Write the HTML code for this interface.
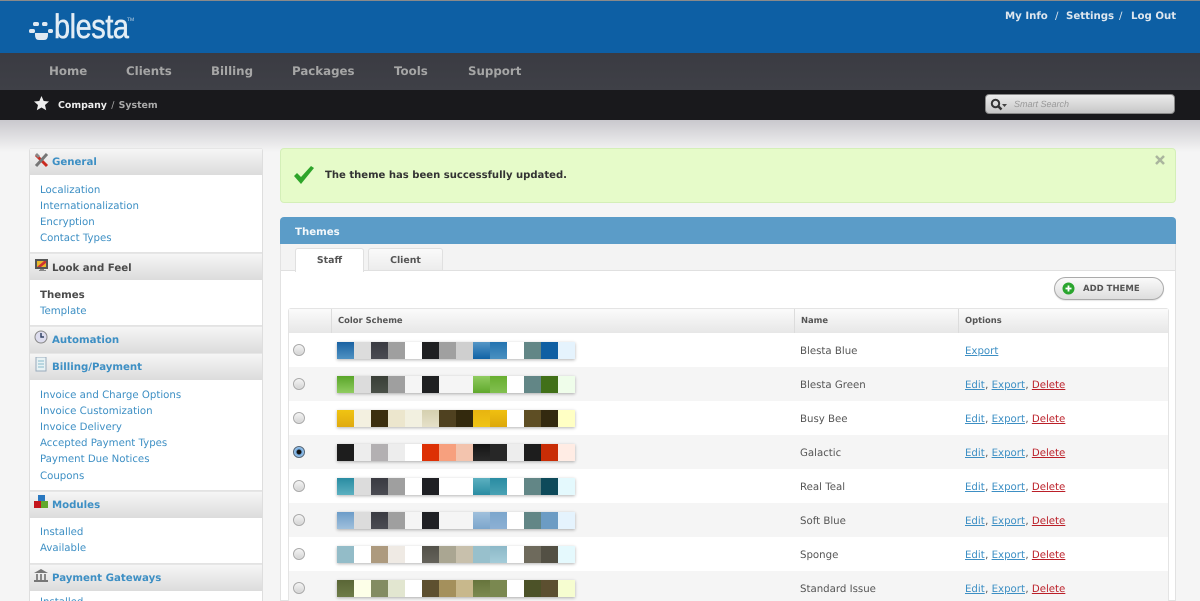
<!DOCTYPE html>
<html><head><meta charset="utf-8"><title>Blesta</title>
<style>
html,body{margin:0;padding:0;width:1200px;height:601px;overflow:hidden}
#p{width:1200px;height:601px;overflow:hidden;position:relative;background:#f5f5f5;font-family:"DejaVu Sans","Liberation Sans",sans-serif;font-size:10.2px;color:#555;text-rendering:geometricPrecision}
.a{position:absolute;white-space:nowrap}
a{color:#3d8fc4;text-decoration:none}
.h{position:absolute;left:30px;width:232px;height:26px;background:linear-gradient(#f6f6f6,#dcdcdc);border-top:1px solid #e6e6e6}
.h b{position:absolute;left:22px;top:6px;padding-top:1px;font-size:10.2px;color:#3d8fc4;white-space:nowrap;line-height:14px}
.h svg{position:absolute;left:4px;top:3px}
.l{position:absolute;left:40px;line-height:14px;padding-top:1px;white-space:nowrap;color:#3d8fc4}
.r{position:absolute;left:289px;width:879px;height:34px}
.g{background:#f5f5f5}
.r i{position:absolute;left:4px;top:11px;width:10px;height:10px;border-radius:50%;border:1px solid #aaa;background:linear-gradient(#f4f4f4,#d4d4d4);box-shadow:inset 0 0 1px #fff}
.s{position:absolute;left:48px;top:9px;width:238px;height:17px;display:flex;box-shadow:0 1px 3px rgba(0,0,0,.3)}
.s u{display:block;width:17px;height:17px;text-decoration:none}
.n{position:absolute;left:511px;top:10px;line-height:14px;padding-top:2px}
.o{position:absolute;left:676px;top:10px;line-height:14px;padding-top:2px;white-space:nowrap}
.o a{text-decoration:underline;margin-right:.4px}
.o a.d{color:#bb1f28}
</style></head><body><div id="p">
<div class="a" style="left:0;top:0;width:1200px;height:53px;background:#0d5fa4;border-top:1px solid #8a8a8a;box-sizing:border-box"></div>
<svg class="a" style="left:28px;top:18px" width="26" height="24"><g fill="#dfe9f2"><rect x="5" y="4" width="6" height="4" rx="1.800"/><rect x="14" y="4" width="5.500" height="4" rx="1.800"/><rect x="1" y="11" width="6" height="4" rx="1.800"/><rect x="20" y="11" width="5" height="4" rx="1.800"/><path d="M7 15h13v2q0 5-4 5h-5q-4 0-4-5z"/></g></svg>
<div class="a" style="left:54px;top:8px;font:34px/38px 'Liberation Sans',sans-serif;color:#e3edf5;transform:scaleX(.85);transform-origin:0 0;letter-spacing:-.5px;-webkit-text-stroke:.5px #e3edf5">blesta</div>
<div class="a" style="left:127px;top:17px;font:5px/6px 'Liberation Sans',sans-serif;color:#c5d7e6">TM</div>
<div class="a" style="left:1005px;top:10px;font-weight:bold;line-height:14px;color:#dde6ee">My Info</div>
<div class="a" style="left:1055px;top:10px;line-height:14px;color:#dde6ee">/</div>
<div class="a" style="left:1066px;top:10px;font-weight:bold;line-height:14px;color:#dde6ee">Settings</div>
<div class="a" style="left:1119px;top:10px;line-height:14px;color:#dde6ee">/</div>
<div class="a" style="left:1131px;top:10px;font-weight:bold;line-height:14px;color:#dde6ee">Log Out</div>

<div class="a" style="left:0;top:53px;width:1200px;height:37px;background:linear-gradient(#3a3b42,#3f4047)"></div>
<div class="a" style="left:49px;top:63px;font-weight:bold;font-size:11.8px;line-height:16px;color:#a6a6a6">Home</div>
<div class="a" style="left:126px;top:63px;font-weight:bold;font-size:11.8px;line-height:16px;color:#a6a6a6">Clients</div>
<div class="a" style="left:211px;top:63px;font-weight:bold;font-size:11.8px;line-height:16px;color:#a6a6a6">Billing</div>
<div class="a" style="left:292px;top:63px;font-weight:bold;font-size:11.8px;line-height:16px;color:#a6a6a6">Packages</div>
<div class="a" style="left:394px;top:63px;font-weight:bold;font-size:11.8px;line-height:16px;color:#a6a6a6">Tools</div>
<div class="a" style="left:468px;top:63px;font-weight:bold;font-size:11.8px;line-height:16px;color:#a6a6a6">Support</div>

<div class="a" style="left:0;top:90px;width:1200px;height:30px;background:#19191c"></div>
<svg class="a" style="left:34px;top:96px" width="15" height="15" viewBox="0 0 15 15"><path fill="#eee" d="M7.5 0l2.2 5 5.3.5-4 3.500 1.200 5.300-4.700-2.800-4.700 2.800L4 9 0 5.500l5.300-.5z"/></svg>
<div class="a" style="left:58px;top:98px;font-weight:bold;font-size:9.400px;line-height:14px;color:#eee;padding-top:1px">Company <span style="font-weight:normal;color:#aaa;margin:0 1px">/</span> <span style="color:#aaa">System</span></div>
<div class="a" style="left:985px;top:94px;width:190px;height:20px;border-radius:4px;background:linear-gradient(#ececec,#c6c6c6);border:1px solid #888;box-sizing:border-box"></div>
<svg class="a" style="left:990px;top:98px" width="17" height="13"><circle cx="5.500" cy="5.500" r="3.700" fill="none" stroke="#333" stroke-width="2"/><path d="M8 8l3.500 3.500" stroke="#333" stroke-width="2.500"/><path d="M12 6h5l-2.500 3z" fill="#444"/></svg>
<div class="a" style="left:1014px;top:98px;font:italic 9px/13px 'Liberation Sans',sans-serif;color:#999">Smart Search</div>
<div class="a" style="left:0;top:120px;width:1200px;height:32px;background:linear-gradient(#c9c8cd,#f5f5f5)"></div>

<div class="a" style="left:29px;top:148px;width:232px;height:453px;border:1px solid #dedede;border-bottom:0;border-radius:3px 3px 0 0;background:#fff"></div>

<div class="h" style="top:148px"><b>General</b>
<svg width="16" height="16" viewBox="0 0 16 16"><path d="M2 3l11 11" stroke="#cb2b20" stroke-width="3"/><path d="M13 2L2 14" stroke="#777" stroke-width="3"/><path d="M1 3l2-2 3 3-2 2z" fill="#888"/></svg></div>
<div class="l" style="top:183px"><a>Localization</a></div>
<div class="l" style="top:199px"><a>Internationalization</a></div>
<div class="l" style="top:215px"><a>Encryption</a></div>
<div class="l" style="top:231px"><a>Contact Types</a></div>
<div class="a" style="left:30px;top:252px;width:232px;height:1px;background:#e3e3e3"></div>

<div class="h" style="top:253px"><b style="color:#4a4a4a;top:7px">Look and Feel</b>
<svg width="16" height="16" viewBox="0 0 16 16"><rect x="1" y="2" width="13" height="10" fill="#555"/><rect x="3" y="4" width="9" height="6" fill="#e9b92a"/><path d="M3 10l7-6h2v2L7 10z" fill="#c33"/><path d="M6 12h4v1h2v1H5v-1h1z" fill="#888"/></svg></div>
<div class="l" style="top:288px;font-weight:bold;color:#4a4a4a">Themes</div>
<div class="l" style="top:304px"><a>Template</a></div>
<div class="a" style="left:30px;top:325px;width:232px;height:1px;background:#e3e3e3"></div>

<div class="h" style="top:326px"><b>Automation</b>
<svg width="16" height="16" viewBox="0 0 16 16"><circle cx="7" cy="7" r="6" fill="#dde" stroke="#888"/><path d="M7 3v4h3" stroke="#346" stroke-width="1.500" fill="none"/></svg></div>

<div class="h" style="top:353px"><b>Billing/Payment</b>
<svg width="16" height="16" viewBox="0 0 16 16"><rect x="2" y="0" width="10" height="14" fill="#e8f2f4" stroke="#9ab"/><path d="M4 4h6M4 7h6M4 10h6" stroke="#8bc"/></svg></div>
<div class="l" style="top:388px"><a>Invoice and Charge Options</a></div>
<div class="l" style="top:404px"><a>Invoice Customization</a></div>
<div class="l" style="top:420px"><a>Invoice Delivery</a></div>
<div class="l" style="top:436px"><a>Accepted Payment Types</a></div>
<div class="l" style="top:452px"><a>Payment Due Notices</a></div>
<div class="l" style="top:469px"><a>Coupons</a></div>
<div class="a" style="left:30px;top:490px;width:232px;height:1px;background:#e3e3e3"></div>

<div class="h" style="top:491px"><b>Modules</b>
<svg width="16" height="16" viewBox="0 0 16 16"><rect x="4" y="0" width="7" height="7" fill="#2a78c0"/><rect x="0" y="6" width="7" height="7" fill="#c4161c"/><rect x="7" y="6" width="7" height="7" fill="#62a82e"/></svg></div>
<div class="l" style="top:525px"><a>Installed</a></div>
<div class="l" style="top:541px"><a>Available</a></div>
<div class="a" style="left:30px;top:563px;width:232px;height:1px;background:#e3e3e3"></div>

<div class="h" style="top:564px"><b>Payment Gateways</b>
<svg width="16" height="16" viewBox="0 0 16 16"><path d="M7 1l7 4H0z" fill="#777"/><path d="M2 6h2v6H2zM6 6h2v6H6zM10 6h2v6h-2z" fill="#888"/><rect x="0" y="12" width="14" height="2" fill="#777"/></svg></div>
<div class="l" style="top:595px"><a>Installed</a></div>

<div class="a" style="left:280px;top:148px;width:896px;height:55px;box-sizing:border-box;background:#e6fbc9;border:1px solid #d4efb8;border-radius:4px"></div>
<svg class="a" style="left:293px;top:165px" width="22" height="20" viewBox="0 0 22 20"><path d="M1 11l3-3 4 4L18 1l3 2L8 19z" fill="#2ea52a"/></svg>
<div class="a" style="left:325px;top:168px;font-weight:bold;font-size:10.050px;line-height:14px;color:#333;padding-top:1px">The theme has been successfully updated.</div>
<svg class="a" style="left:1155px;top:155px" width="10" height="10"><path d="M1 1l8 8M9 1L1 9" stroke="#aab59e" stroke-width="2.500"/></svg>

<div class="a" style="left:280px;top:217px;width:896px;height:384px;box-sizing:border-box;border:1px solid #e2e2e2;border-top:0;border-radius:4px 4px 0 0;background:#fff"></div>
<div class="a" style="left:280px;top:217px;width:896px;height:27px;background:#5b9cc8;border-radius:4px 4px 0 0"></div>
<div class="a" style="left:295px;top:226px;font-weight:bold;font-size:10.200px;line-height:14px;color:#f4f8fb">Themes</div>
<div class="a" style="left:281px;top:244px;width:894px;height:27px;background:#f3f3f3;border-bottom:1px solid #e0e0e0;box-sizing:border-box"></div>
<div class="a" style="left:295px;top:248px;width:69px;height:24px;box-sizing:border-box;background:#fff;border:1px solid #e0e0e0;border-bottom:0;border-radius:3px 3px 0 0;text-align:center;font-weight:bold;font-size:9.400px;line-height:24px;color:#555">Staff</div>
<div class="a" style="left:368px;top:248px;width:75px;height:23px;box-sizing:border-box;background:linear-gradient(#fafafa,#ececec);border:1px solid #e0e0e0;border-radius:3px 3px 0 0;text-align:center;font-weight:bold;font-size:9.400px;line-height:24px;color:#555">Client</div>

<div class="a" style="left:1054px;top:277px;width:110px;height:23px;box-sizing:border-box;border:1px solid #aaa;border-radius:12px;background:linear-gradient(#fafafa,#dedede);box-shadow:0 1px 1px rgba(0,0,0,.1)"></div>
<svg class="a" style="left:1062px;top:282px" width="13" height="13"><circle cx="6.500" cy="6.500" r="6" fill="#2aa52e"/><path d="M6.500 3.500v6M3.500 6.500h6" stroke="#fff" stroke-width="1.800"/></svg>
<div class="a" style="left:1083px;top:283px;font-weight:bold;font-size:8.500px;line-height:13px;color:#555">ADD THEME</div>

<div class="a" style="left:288px;top:308px;width:881px;height:293px;box-sizing:border-box;border:1px solid #e4e4e4;border-bottom:0;border-radius:3px 3px 0 0"></div>
<div class="a" style="left:289px;top:309px;width:879px;height:24px;background:linear-gradient(#fbfbfb,#e7e7e7)"></div>
<div class="a" style="left:331px;top:309px;width:1px;height:24px;background:#dcdcdc"></div>
<div class="a" style="left:794px;top:309px;width:1px;height:24px;background:#dcdcdc"></div>
<div class="a" style="left:958px;top:309px;width:1px;height:24px;background:#dcdcdc"></div>
<div class="a" style="left:338px;top:314px;font-weight:bold;font-size:8.400px;line-height:13px;color:#555">Color Scheme</div>
<div class="a" style="left:801px;top:314px;font-weight:bold;font-size:8.400px;line-height:13px;color:#555">Name</div>
<div class="a" style="left:965px;top:314px;font-weight:bold;font-size:8.400px;line-height:13px;color:#555">Options</div>

<div class="r" style="top:333px"><i></i><div class="s"><u style="background:linear-gradient(#1a62a2,#4f92c3)"></u><u style="background:#dcdcdc"></u><u style="background:linear-gradient(#3a3b42,#4a4b52)"></u><u style="background:#9f9f9f"></u><u style="background:#fff"></u><u style="background:#1f2022"></u><u style="background:#a0a0a0"></u><u style="background:#cfcfcf"></u><u style="background:linear-gradient(#5596c6,#1062a5)"></u><u style="background:linear-gradient(#2473b0,#4a90c0)"></u><u style="background:#fff"></u><u style="background:#628686"></u><u style="background:#0f5fa3"></u><u style="background:#e5f3fd"></u></div><div class="n">Blesta Blue</div><div class="o"><a>Export</a></div></div>

<div class="r g" style="top:367px"><i></i><div class="s"><u style="background:linear-gradient(#5aa62a,#90cc60)"></u><u style="background:#dcdcdc"></u><u style="background:linear-gradient(#3a3f38,#4a5048)"></u><u style="background:#9f9f9f"></u><u style="background:#f5f5f5"></u><u style="background:#1f2022"></u><u style="background:#f5f5f5"></u><u style="background:#f5f5f5"></u><u style="background:linear-gradient(#90cc60,#60a82c)"></u><u style="background:linear-gradient(#68ae30,#82c050)"></u><u style="background:#fff"></u><u style="background:#628686"></u><u style="background:#417018"></u><u style="background:#effdea"></u></div><div class="n">Blesta Green</div><div class="o"><a>Edit</a>, <a>Export</a>, <a class="d">Delete</a></div></div>

<div class="r" style="top:401px"><i></i><div class="s"><u style="background:linear-gradient(#f0c412,#e0aa10)"></u><u style="background:#f3f0e0"></u><u style="background:#3c2f0f"></u><u style="background:#ece6cd"></u><u style="background:#f2f0e0"></u><u style="background:linear-gradient(#d5d0b0,#e5e0c8)"></u><u style="background:#4f4120"></u><u style="background:#33290d"></u><u style="background:linear-gradient(#e8b410,#f0c414)"></u><u style="background:linear-gradient(#f0c010,#dca80c)"></u><u style="background:#fff"></u><u style="background:#5e4e24"></u><u style="background:#33290f"></u><u style="background:#ffffc4"></u></div><div class="n">Busy Bee</div><div class="o"><a>Edit</a>, <a>Export</a>, <a class="d">Delete</a></div></div>

<div class="r g" style="top:435px"><i style="background:radial-gradient(circle,#111 0 2px,#7fb4e6 3px);border-color:#567"></i><div class="s"><u style="background:#1d1d1d"></u><u style="background:#ededed"></u><u style="background:#b3b0b2"></u><u style="background:#ededed"></u><u style="background:#fff"></u><u style="background:#dd3005"></u><u style="background:#f7a07e"></u><u style="background:#f3c4ae"></u><u style="background:linear-gradient(#151515,#2a2a2a)"></u><u style="background:#272727"></u><u style="background:#ededed"></u><u style="background:#1d1d1d"></u><u style="background:#c92d06"></u><u style="background:#ffece4"></u></div><div class="n">Galactic</div><div class="o"><a>Edit</a>, <a>Export</a>, <a class="d">Delete</a></div></div>

<div class="r" style="top:469px"><i></i><div class="s"><u style="background:linear-gradient(#2a8ca2,#5cb0c0)"></u><u style="background:#dcdcdc"></u><u style="background:linear-gradient(#3a3b42,#4a4b52)"></u><u style="background:#9f9f9f"></u><u style="background:#fff"></u><u style="background:#1f2024"></u><u style="background:#fff"></u><u style="background:#fff"></u><u style="background:linear-gradient(#5cb0c0,#2a8ca2)"></u><u style="background:linear-gradient(#2a8ca2,#4aa2b4)"></u><u style="background:#fff"></u><u style="background:#628686"></u><u style="background:#0e4a5a"></u><u style="background:#e4f9fd"></u></div><div class="n">Real Teal</div><div class="o"><a>Edit</a>, <a>Export</a>, <a class="d">Delete</a></div></div>

<div class="r g" style="top:503px"><i></i><div class="s"><u style="background:linear-gradient(#6c9cc8,#a0c0dc)"></u><u style="background:#dcdcdc"></u><u style="background:linear-gradient(#3a3b42,#4a4b52)"></u><u style="background:#9f9f9f"></u><u style="background:#f5f5f5"></u><u style="background:#1f2024"></u><u style="background:#f5f5f5"></u><u style="background:#f5f5f5"></u><u style="background:linear-gradient(#a0c0dc,#7ca6cc)"></u><u style="background:linear-gradient(#7ca6cc,#8cb0d4)"></u><u style="background:#fff"></u><u style="background:#628686"></u><u style="background:#6c9cc4"></u><u style="background:#e5f3fd"></u></div><div class="n">Soft Blue</div><div class="o"><a>Edit</a>, <a>Export</a>, <a class="d">Delete</a></div></div>

<div class="r" style="top:537px"><i></i><div class="s"><u style="background:#93bcc8"></u><u style="background:#fff"></u><u style="background:#ad9a7e"></u><u style="background:#efeae4"></u><u style="background:#fff"></u><u style="background:linear-gradient(#53514a,#64625a)"></u><u style="background:#aaa692"></u><u style="background:#c8c0ac"></u><u style="background:#98c0cc"></u><u style="background:linear-gradient(#8cb8c8,#a4ccd8)"></u><u style="background:#fff"></u><u style="background:#6e6a5c"></u><u style="background:#535044"></u><u style="background:#e5f9fd"></u></div><div class="n">Sponge</div><div class="o"><a>Edit</a>, <a>Export</a>, <a class="d">Delete</a></div></div>

<div class="r g" style="top:571px;height:30px"><i></i><div class="s"><u style="background:linear-gradient(#5a6636,#6e7c48)"></u><u style="background:#fdffe8"></u><u style="background:#838c62"></u><u style="background:#e2e6d0"></u><u style="background:#fff"></u><u style="background:#5e5030"></u><u style="background:#a4905c"></u><u style="background:#c8b88c"></u><u style="background:linear-gradient(#66743c,#7c8a50)"></u><u style="background:#7a8850"></u><u style="background:#fff"></u><u style="background:#4c5228"></u><u style="background:#5c4f30"></u><u style="background:#f6fdd0"></u></div><div class="n">Standard Issue</div><div class="o"><a>Edit</a>, <a>Export</a>, <a class="d">Delete</a></div></div>
</div></body></html>
